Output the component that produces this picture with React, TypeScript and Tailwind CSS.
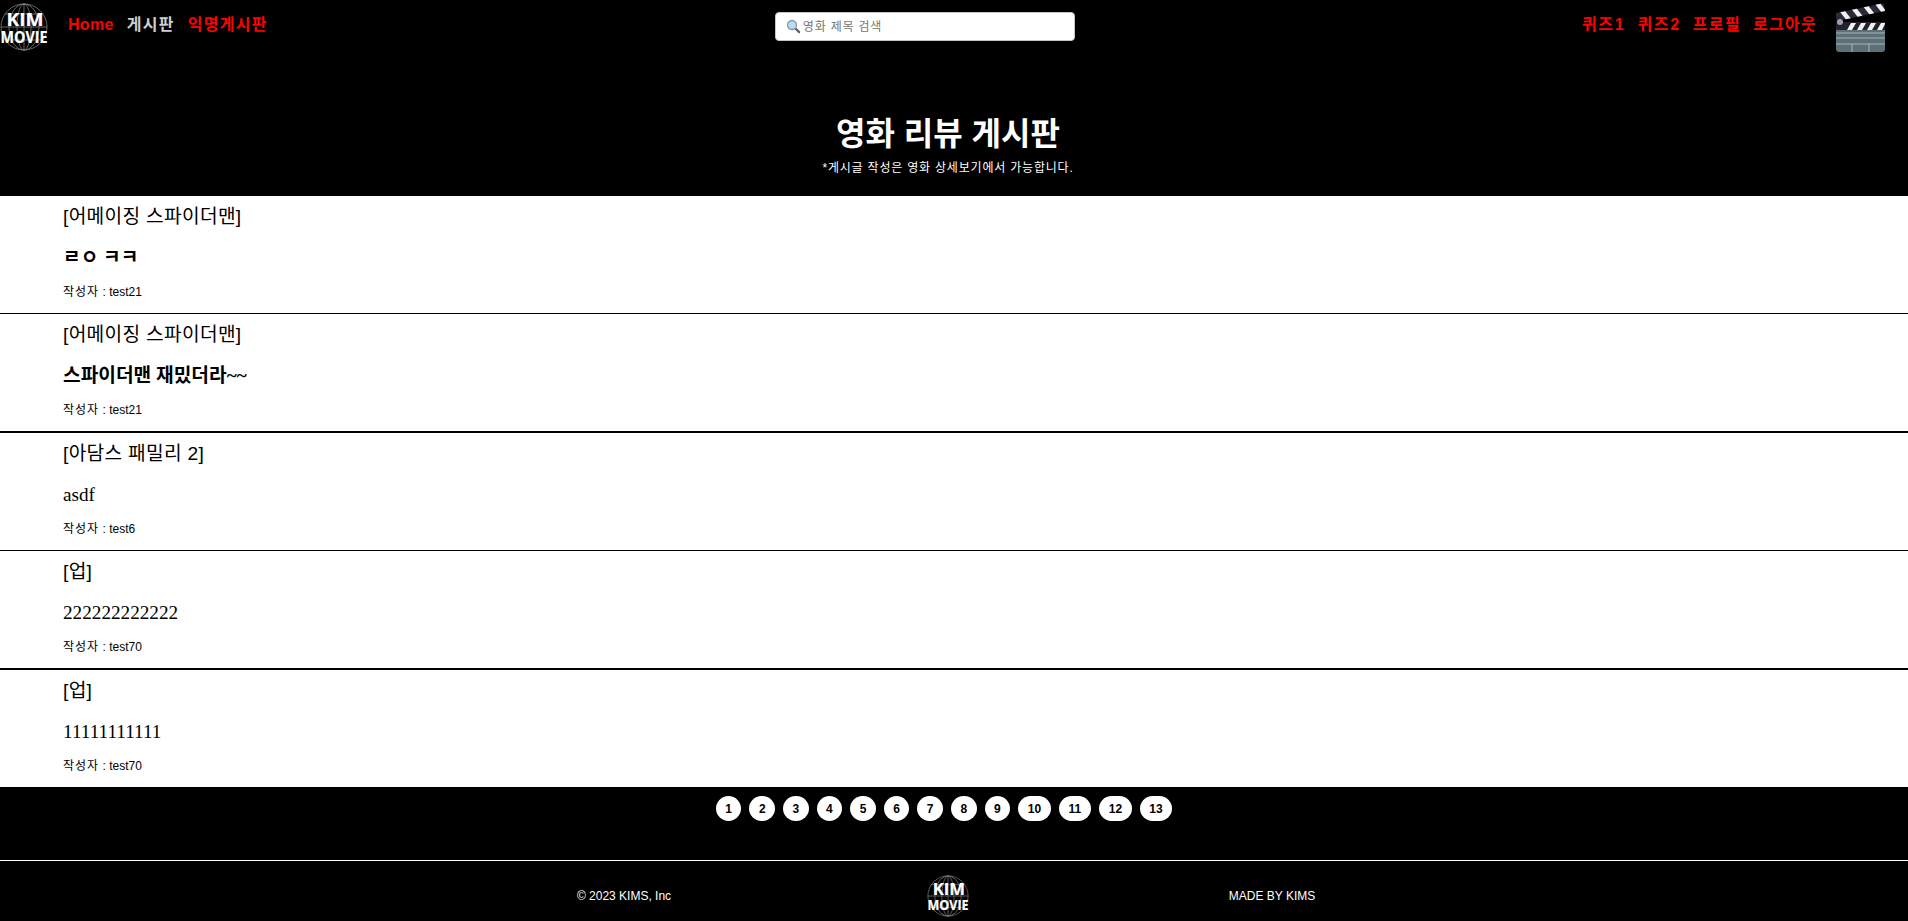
import React from "react";

const sans = "font-['Liberation_Sans','Noto_Sans_CJK_KR',sans-serif]";

function Logo({ className }: { className: string }) {
  return (
    <svg viewBox="0 0 48 50" className={`overflow-visible ${className}`}>
      <g fill="none" stroke="#8f8f8f" strokeWidth="0.7">
        <circle cx="24" cy="25" r="23" />
        <ellipse cx="24" cy="25" rx="15" ry="23" />
        <ellipse cx="24" cy="25" rx="7" ry="23" />
        <path d="M24 2V48M5 12H43M1 25H47M5 38H43" />
      </g>
      <text x="25" y="24" textAnchor="middle" fill="#fff" stroke="#fff" strokeWidth="0.2" fontFamily="'Open Sans','Liberation Sans',sans-serif" fontWeight="700" fontSize="18" textLength="37" lengthAdjust="spacingAndGlyphs">KIM</text>
      <text x="24" y="41" textAnchor="middle" fill="#fff" stroke="#fff" strokeWidth="0.2" fontFamily="'Open Sans','Liberation Sans',sans-serif" fontWeight="700" fontSize="16" textLength="47" lengthAdjust="spacingAndGlyphs">MOVIE</text>
    </svg>
  );
}

function Clapper() {
  return (
    <svg viewBox="0 0 50 50" className="h-[50px] w-[50px] shrink-0">
      <g transform="rotate(-11.7 1 19)">
        <rect x="1" y="11" width="49" height="8" fill="#2c2a38" />
        <path d="M6 11h5l4 8h-5zM18 11h5l4 8h-5zM30 11h5l4 8h-5zM42 11h5l3 6v2h-4z" fill="#f2f2f2" />
      </g>
      <rect x="0" y="20" width="49" height="8" fill="#23212c" />
      <path d="M11 28l4-7h5l-4 7zM21 28l4-7h5l-4 7zM31 28l4-7h5l-4 7zM41 28l4-7h4v1l-3 6z" fill="#f2f2f2" />
      <circle cx="4" cy="20" r="3" fill="#9aa3a8" />
      <path d="M0 28H49V47a3 3 0 0 1-3 3H3a3 3 0 0 1-3-3Z" fill="#5d7077" />
      <path d="M0 31H49M0 36H49M0 42H49M16 42V50M33 42V50" stroke="#a8b5b8" strokeWidth="1" fill="none" />
    </svg>
  );
}

function SearchGlyph() {
  return (
    <svg viewBox="0 0 16 16" className="h-[15px] w-[15px] shrink-0">
      <path d="M9.6 9.6L14 14" stroke="#5f5f66" strokeWidth="2.4" strokeLinecap="round" />
      <circle cx="6.4" cy="6.4" r="4.8" fill="#b7dcf3" stroke="#8d9aa5" strokeWidth="1.4" />
    </svg>
  );
}

const posts = [
  { t: "[어메이징 스파이더맨]", c: "ㄹㅇ ㅋㅋ", a: "test21", bold: true, line: "border-b border-black" },
  { t: "[어메이징 스파이더맨]", c: "스파이더맨 재밌더라~~", a: "test21", bold: true, line: "border-b-2 border-black" },
  { t: "[아담스 패밀리 2]", c: "asdf", a: "test6", bold: false, line: "border-b border-black" },
  { t: "[업]", c: "222222222222", a: "test70", bold: false, line: "border-b-2 border-black" },
  { t: "[업]", c: "11111111111", a: "test70", bold: false, line: "" },
];

const pages = ["1", "2", "3", "4", "5", "6", "7", "8", "9", "10", "11", "12", "13"];

export default function App() {
  return (
    <div className={`flex h-[921px] w-[1908px] flex-col overflow-hidden bg-black ${sans}`}>
      <header className="flex h-[54px] items-start pt-[2px]">
        <Logo className="h-[50px] w-[48px] shrink-0" />
        <nav className="ml-5 mt-[12px] flex gap-[13px] text-base font-bold leading-[22px] text-[#ff0000]">
          <span className="tracking-[0.3px]">Home</span>
          <span className="tracking-[1.3px] text-[#cfcfcf]">게시판</span>
          <span className="tracking-[1.3px]">익명게시판</span>
        </nav>
        <div className="ml-[507px] mt-[10px] flex h-[29px] w-[300px] items-center gap-[2px] rounded-[4px] border border-[#c5c5c5] bg-white pl-[10px]">
          <SearchGlyph />
          <span className="text-xs tracking-[0.8px] text-[#757575]">영화 제목 검색</span>
        </div>
        <nav className="ml-auto mr-[19px] mt-[12px] flex gap-[12px] text-base font-bold leading-[22px] tracking-[1.3px] text-[#ff0000]">
          <span className="tracking-[1.7px]">퀴즈1</span>
          <span className="tracking-[1.7px]">퀴즈2</span>
          <span>프로필</span>
          <span>로그아웃</span>
        </nav>
        <div className="mr-[22px]">
          <Clapper />
        </div>
      </header>

      <section className="flex h-[142px] flex-col items-center pr-[12px] pt-[60px] text-white">
        <h1 className="text-[32px] font-bold leading-[40px]">영화 리뷰 게시판</h1>
        <p className="mt-[5px] text-xs leading-[18px] tracking-[0.8px]">*게시글 작성은 영화 상세보기에서 가능합니다.</p>
      </section>

      <main className="flex h-[591px] flex-col bg-white text-black">
        {posts.map((p, i) => (
          <article key={i} className={`flex flex-1 flex-col pl-[63px] ${p.line}`}>
            <h2 className="mt-[8px] text-[19.2px] font-normal leading-[26px] tracking-[0.3px]">{p.t}</h2>
            <p className={`mt-[15px] font-['Liberation_Serif','Noto_Sans_CJK_KR',serif] text-[19.2px] leading-[26px] ${p.bold ? "font-bold" : "font-normal"}`}>{p.c}</p>
            <p className="mt-[12px] text-xs leading-[18px]">
              <span className="tracking-[1px]">작성자</span> : {p.a}
            </p>
          </article>
        ))}
      </main>

      <nav className="flex h-[73px] justify-center gap-[8px] pr-[20px] pt-[9px]">
        {pages.map((n) => (
          <span key={n} className={`flex h-[25px] items-center justify-center rounded-full bg-white text-xs font-bold text-black ${n.length > 1 ? "w-[32.5px]" : "w-[25.6px]"}`}>
            {n}
          </span>
        ))}
      </nav>

      <footer className="flex flex-1 border-t border-white pt-[10px] text-xs text-white">
        <div className="ml-[462px] grid h-full w-[972px] grid-cols-3 items-center">
          <span className="text-center">© 2023 KIMS, Inc</span>
          <div className="flex justify-center">
            <Logo className="h-[44px] w-[42px]" />
          </div>
          <span className="text-center">MADE BY KIMS</span>
        </div>
      </footer>
    </div>
  );
}
